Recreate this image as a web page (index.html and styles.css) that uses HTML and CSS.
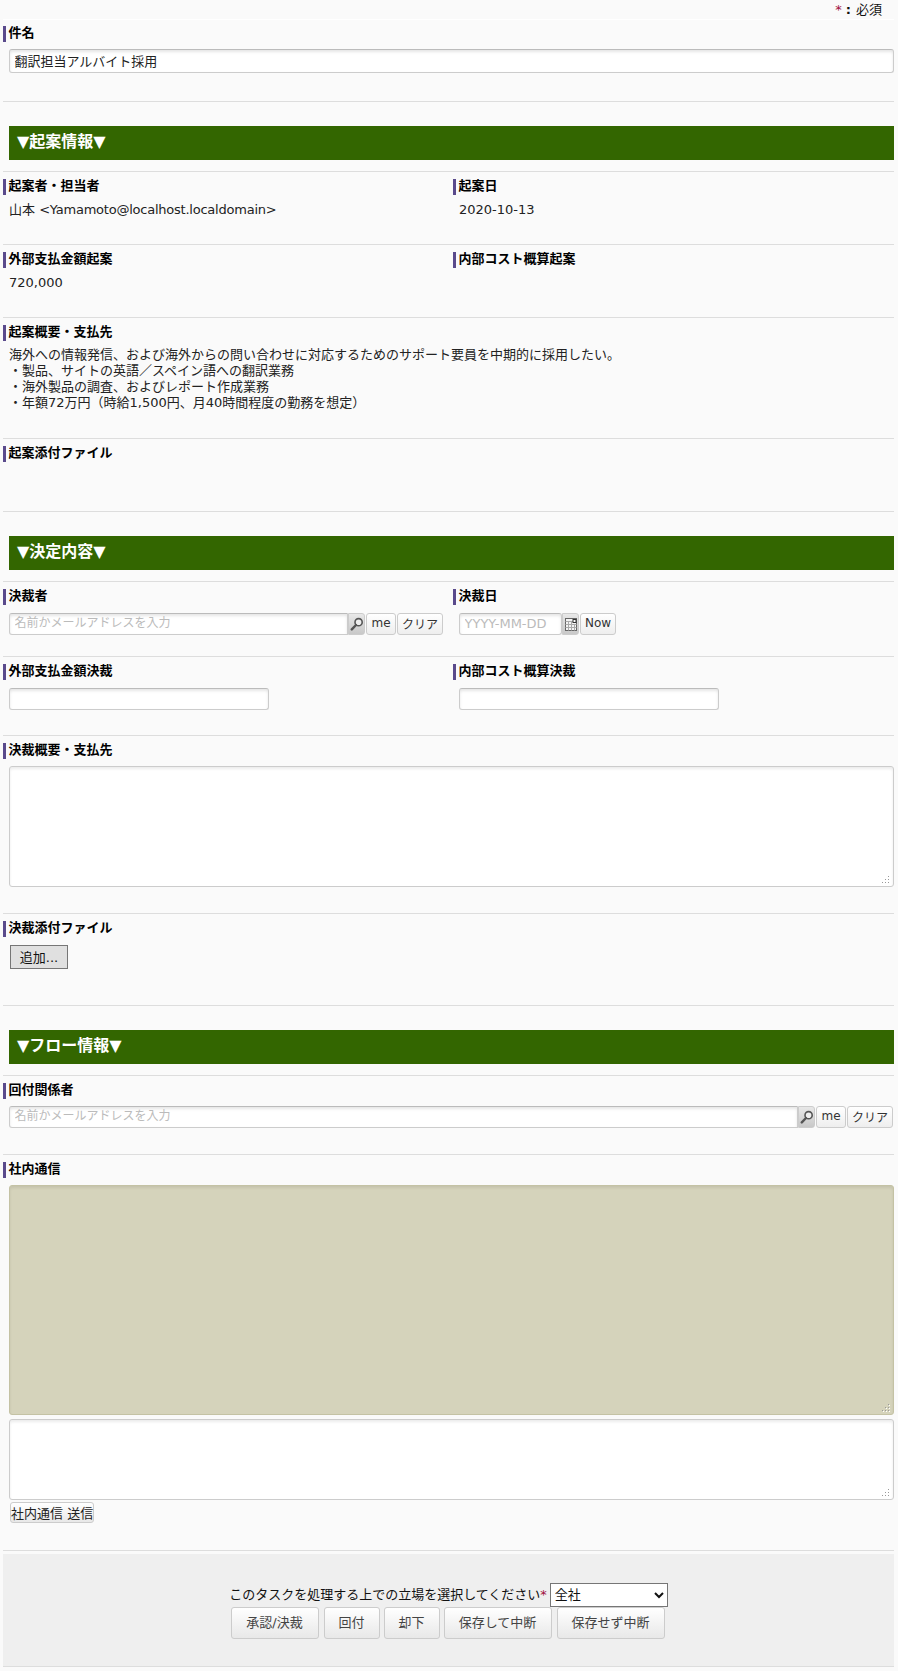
FILE: index.html
```html
<!DOCTYPE html>
<html lang="ja">
<head>
<meta charset="utf-8">
<title>起案</title>
<link rel="stylesheet" href="styles.css">
</head>
<body>
<div class="page">
  <div class="required-note"><span class="star">*</span><span class="colon">:</span>必須</div>
  <section class="row row-subject">
    <div class="label">件名</div>
    <input class="text full" type="text" value="翻訳担当アルバイト採用">
  </section>

  <section class="row row-head">
    <h2 class="band">▼起案情報▼</h2>
  </section>
  <section class="row row-info two">
    <div class="col"><div class="label">起案者・担当者</div><div class="value">山本 <span class="latin">&lt;Yamamoto@localhost.localdomain&gt;</span></div></div>
    <div class="col"><div class="label">起案日</div><div class="value">2020-10-13</div></div>
  </section>
  <section class="row row-info two">
    <div class="col"><div class="label">外部支払金額起案</div><div class="value">720,000</div></div>
    <div class="col"><div class="label">内部コスト概算起案</div></div>
  </section>
  <section class="row row-summary">
    <div class="label">起案概要・支払先</div>
    <div class="value multi">海外への情報発信、および海外からの問い合わせに対応するためのサポート要員を中期的に採用したい。<br>・製品、サイトの英語／スペイン語への翻訳業務<br>・海外製品の調査、およびレポート作成業務<br>・年額72万円（時給1,500円、月40時間程度の勤務を想定）</div>
  </section>
  <section class="row row-info">
    <div class="label">起案添付ファイル</div>
  </section>

  <section class="row row-head">
    <h2 class="band">▼決定内容▼</h2>
  </section>
  <section class="row row-picker two">
    <div class="col">
      <div class="label">決裁者</div>
      <div class="picker picker-half">
        <input class="text grow name" type="text" placeholder="名前かメールアドレスを入力">
        <button class="icon-btn" type="button" aria-label="検索"><svg width="14" height="14" viewBox="0 0 14 14"><circle cx="8.6" cy="5.2" r="3.6" fill="#eee" stroke="#555" stroke-width="1.6"/><path d="M6 8 1.8 12.4" stroke="#555" stroke-width="2.4" stroke-linecap="round"/></svg></button>
        <button class="mini me" type="button">me</button>
        <button class="mini clear" type="button">クリア</button>
      </div>
    </div>
    <div class="col">
      <div class="label">決裁日</div>
      <div class="picker">
        <input class="text date" type="text" placeholder="YYYY-MM-DD">
        <button class="icon-btn" type="button" aria-label="カレンダー"><svg width="12" height="13" viewBox="0 0 12 13"><rect x=".5" y=".5" width="11" height="12" fill="#f4f4f4" stroke="#666"/><path d="M.5 3.5h8M.5 6.5h11M.5 9.5h11M3.5 3.5v9M6.5 3.5v9M9.5 6.5v6" stroke="#aaa" fill="none"/><rect x="8" y="1.5" width="3" height="3" fill="#fff" stroke="#333"/></svg></button>
        <button class="mini now" type="button">Now</button>
      </div>
    </div>
  </section>
  <section class="row row-amount two">
    <div class="col"><div class="label">外部支払金額決裁</div><input class="text amount" type="text"></div>
    <div class="col"><div class="label">内部コスト概算決裁</div><input class="text amount" type="text"></div>
  </section>
  <section class="row row-decision">
    <div class="label">決裁概要・支払先</div>
    <textarea class="area area-decision"></textarea>
  </section>
  <section class="row row-attach">
    <div class="label">決裁添付ファイル</div>
    <button class="add" type="button">追加...</button>
  </section>

  <section class="row row-head">
    <h2 class="band">▼フロー情報▼</h2>
  </section>
  <section class="row row-flow">
    <div class="label">回付関係者</div>
    <div class="picker">
      <input class="text grow name" type="text" placeholder="名前かメールアドレスを入力">
      <button class="icon-btn" type="button" aria-label="検索"><svg width="14" height="14" viewBox="0 0 14 14"><circle cx="8.6" cy="5.2" r="3.6" fill="#eee" stroke="#555" stroke-width="1.6"/><path d="M6 8 1.8 12.4" stroke="#555" stroke-width="2.4" stroke-linecap="round"/></svg></button>
      <button class="mini me" type="button">me</button>
      <button class="mini clear" type="button">クリア</button>
    </div>
  </section>
  <section class="row row-comm">
    <div class="label">社内通信</div>
    <textarea class="area area-log" readonly></textarea>
    <textarea class="area area-msg"></textarea>
    <button class="send" type="button">社内通信 送信</button>
  </section>

  <section class="actions">
    <div class="role-line">このタスクを処理する上での立場を選択してください<span class="star">*</span><select class="role"><option>全社</option></select></div>
    <div class="action-buttons">
      <button class="act act-a" type="button">承認/決裁</button>
      <button class="act act-b" type="button">回付</button>
      <button class="act act-b" type="button">却下</button>
      <button class="act act-c" type="button">保存して中断</button>
      <button class="act act-c" type="button">保存せず中断</button>
    </div>
  </section>
</div>
</body>
</html>
```
FILE: styles.css
```css
* { box-sizing: border-box; }
html, body { margin: 0; padding: 0; background: #fafafa; }
body {
  font-family: "DejaVu Sans", "Noto Sans CJK JP", sans-serif;
  font-size: 13px;
  color: #111;
  height: 1671px;
}
.page { margin: 0 4px 0 3px; }
.required-note {
  height: 20px;
  padding: 3px 12px 0 0;
  text-align: right;
  font-size: 13px;
  line-height: 14px;
  border-bottom: 1px solid #fff;
}
.star { color: #a01040; }
.colon { margin: 0 5px 0 4px; font-weight: bold; }
.row { border-top: 1px solid #ddd; padding: 7px 0 0; }
.row-subject { border-top: 0; height: 81px; padding-top: 6px; }
.row-head { height: 70px; padding: 24px 0 0 6px; }
.row-info { height: 73px; }
.row-summary { height: 121px; }
.row-picker { height: 75px; }
.row-amount { height: 79px; }
.row-decision { height: 178px; }
.row-attach { height: 92px; }
.row-flow { height: 79px; }
.row-comm { height: 397px; border-bottom: 1px solid #ddd; }
.two { display: grid; grid-template-columns: 450px 1fr; }
.label {
  border-left: 3px solid #5a4a8c;
  padding-left: 2.6px;
  height: 16px;
  line-height: 14px;
  font-weight: bold;
  font-size: 13px;
  color: #000;
}
.value { margin: 7px 0 0 6px; line-height: 16px; font-size: 13px; color: #222; }
.latin { letter-spacing: -.23px; }
.multi { margin-top: 6px; }
.band {
  margin: 0;
  height: 34px;
  line-height: 32px;
  padding-left: 8px;
  background: #336600;
  color: #fff;
  font-size: 16px;
  font-weight: bold;
}
.text {
  display: block;
  height: 22px;
  border: 1px solid #ccc;
  border-top-color: #bbb;
  border-radius: 3px;
  background: #fff;
  box-shadow: inset 0 2px 3px rgba(0, 0, 0, .1);
  padding: 0 4.5px 2px;
  font: 13px "DejaVu Sans", "Noto Sans CJK JP", sans-serif;
  color: #222;
  outline: 0;
}
.text::placeholder { color: #bbb; opacity: 1; }
.name { font-size: 12px; }
.full { width: 885px; height: 24px; margin: 7px 0 0 6px; }
.amount { width: 260px; margin: 8px 0 0 6px; }
.picker { display: flex; margin: 8px 0 0 6px; height: 22px; }
.row-flow .picker { margin: 7px 1px 0 6px; }
.picker-half { width: 434px; }
.grow { flex: 1 1 auto; min-width: 0; border-radius: 3px 0 0 3px; }
.date { width: 103px; }
.icon-btn {
  flex: none;
  width: 17px;
  height: 22px;
  padding: 0;
  border: 1px solid #ccc;
  border-radius: 0 3px 3px 0;
  background: linear-gradient(#e8e8e8, #c8c8c8);
  display: flex;
  align-items: center;
  justify-content: center;
}
.mini {
  flex: none;
  height: 22px;
  padding: 0 0 2px;
  border: 1px solid #ccc;
  border-radius: 3px;
  background: linear-gradient(#fff, #eee);
  font: 12px "DejaVu Sans", "Noto Sans CJK JP", sans-serif;
  color: #333;
}
.me { width: 30px; margin-left: 1px; }
.clear { width: 46px; margin-left: 1px; }
.now { width: 36px; margin-left: 1px; }
.area {
  display: block;
  width: 885px;
  margin: 7px 0 0 6px;
  border: 1px solid #ccc;
  border-radius: 3px;
  background: #fff;
  box-shadow: inset 0 2px 3px rgba(0, 0, 0, .08);
  outline: 0;
  font: 13px "DejaVu Sans", "Noto Sans CJK JP", sans-serif;
}
.area::-webkit-resizer {
  background-color: transparent;
  background-repeat: no-repeat;
  background-size: 1px 1px;
  background-image:
    linear-gradient(#999, #999), linear-gradient(#999, #999), linear-gradient(#999, #999),
    linear-gradient(#999, #999), linear-gradient(#999, #999), linear-gradient(#999, #999),
    linear-gradient(#fff, #fff), linear-gradient(#fff, #fff), linear-gradient(#fff, #fff),
    linear-gradient(#fff, #fff), linear-gradient(#fff, #fff), linear-gradient(#fff, #fff);
  background-position:
    10px 5px, 7px 8px, 10px 8px, 4px 11px, 7px 11px, 10px 11px,
    11px 6px, 8px 9px, 11px 9px, 5px 12px, 8px 12px, 11px 12px;
}
.area-decision { height: 121px; }
.area-log { height: 230px; background: #d5d3bb; border-color: #c4c2a4; }
.area-msg { height: 81px; margin-top: 4px; }
.add {
  display: block;
  width: 58px;
  height: 24px;
  margin: 8px 0 0 7px;
  padding: 0 0 2px;
  border: 1px solid #767676;
  background: #e0e0e0;
  font: 13px "DejaVu Sans", "Noto Sans CJK JP", sans-serif;
  color: #111;
}
.send {
  display: block;
  width: 84px;
  height: 21px;
  margin: 2px 0 0 7px;
  padding: 0 0 3px;
  border: 1px solid #ccc;
  border-radius: 3px;
  background: linear-gradient(#fff, #e8e8e8);
  font: 13px "DejaVu Sans", "Noto Sans CJK JP", sans-serif;
  color: #222;
  white-space: nowrap;
}
.actions {
  margin-top: 3px;
  height: 113px;
  padding-top: 29px;
  background: #efefef;
  border-bottom: 1px solid #ddd;
}
.role-line {
  display: flex;
  justify-content: center;
  align-items: center;
  height: 24px;
  font-size: 13px;
  line-height: 20px;
  color: #111;
}
.role {
  width: 118px;
  height: 24px;
  margin-left: 3px;
  padding: 0 0 2px;
  border: 1px solid #767676;
  background-color: #fff;
  font: 13px "DejaVu Sans", "Noto Sans CJK JP", sans-serif;
  color: #111;
}
.action-buttons { display: flex; justify-content: center; gap: 4px; padding-right: 2px; }
.act {
  height: 32px;
  padding: 0 0 3px;
  border: 1px solid #ccc;
  border-radius: 3px;
  background: linear-gradient(#fff, #e8e8e8);
  font: 13px "DejaVu Sans", "Noto Sans CJK JP", sans-serif;
  color: #444;
}
.act-a { width: 88px; margin-right: 1px; }
.act-b { width: 56px; }
.act-c { width: 108px; }
.act-c + .act-c { margin-left: 1px; }
```
